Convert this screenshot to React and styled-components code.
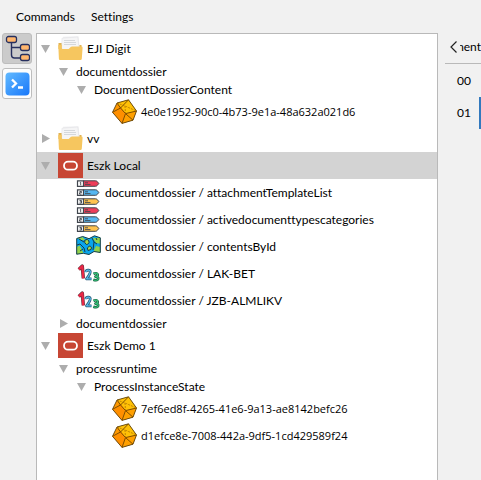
import React, { useState } from "react";
import styled, { createGlobalStyle } from "styled-components";

const GlobalStyle = createGlobalStyle`
  * { box-sizing: border-box; }
  body {
    margin: 0;
    background: #f1f1f1;
    color: #000;
    font: 12px/18px Lato, "Open Sans", sans-serif;
    font-variant-ligatures: none;
  }
  button { font: inherit; color: inherit; border: 0; padding: 0; background: none; }
`;

const Window = styled.div`
  display: flex;
  flex-direction: column;
  height: 100vh;
  overflow: hidden;
`;

const MenuBar = styled.nav`
  display: flex;
  gap: 16px;
  flex: none;
  height: 33px;
  padding: 0 16px;
`;

const MenuButton = styled.button`
  white-space: nowrap;
`;

const Workspace = styled.div`
  display: flex;
  flex: 1;
  min-height: 0;
`;

const ToolRail = styled.aside`
  display: flex;
  flex-direction: column;
  gap: 4px;
  flex: none;
  padding: 0 4px 0 2px;
`;

const ToolButton = styled.button`
  display: grid;
  place-items: center;
  width: 30px;
  height: 31px;
  border: 1px solid #bdbdbd;
  border-radius: 3px;
  background: ${(p) => (p.$active ? "#cbcbcb" : "#fdfdfd")};
  svg { display: block; }
`;

const TreePanel = styled.main`
  flex: 1;
  min-width: 0;
  overflow: hidden;
  padding-top: 1px;
  border: 1px solid #b9b9b9;
  border-bottom: 0;
  background: #fff;
`;

const Tree = styled.ul`
  margin: 0;
  padding: 0;
  list-style: none;
`;

const TreeRow = styled.li`
  display: flex;
  align-items: center;
  height: ${(p) => (p.$tall ? 27 : 18)}px;
  padding-left: ${(p) => 4 + p.$level * 18}px;
  background: ${(p) => (p.$selected ? "#d3d3d3" : "transparent")};
  white-space: nowrap;
`;

const NodeLabel = styled.span`
  padding-top: 1px;
`;

const IdLabel = styled(NodeLabel)`
  font-family: "Open Sans", sans-serif;
  font-size: 11px;
`;

const Caret = styled.button`
  display: block;
  flex: none;
  width: 9px;
  height: 9px;
  margin-right: 8px;
  svg { display: block; }
`;

const CaretSpace = styled.span`
  flex: none;
  width: 17px;
`;

const IconSlot = styled.span`
  flex: none;
  width: 25px;
  height: 25px;
  margin-right: 4px;
  svg { display: block; }
`;

const SidePanel = styled.section`
  flex: none;
  width: 36px;
  margin-left: 7px;
  overflow: hidden;
`;

const TabStrip = styled.div`
  display: flex;
  align-items: center;
  height: 31px;
  padding: 0 0 2px 5px;
  border-bottom: 1px solid #b9b9b9;
`;

const ScrollButton = styled.button`
  flex: none;
  width: 8px;
  svg { display: block; }
`;

const TabLabel = styled.span`
  display: flex;
  flex: 1;
  justify-content: flex-end;
  min-width: 0;
  margin-left: 2px;
  overflow: hidden;
`;

const LineList = styled.ol`
  margin: 0;
  padding: 1px 0 0;
  list-style: none;
`;

const Line = styled.li`
  display: flex;
  align-items: center;
  height: 32px;
  padding-left: 12px;
  border-right: 2px solid ${(p) => (p.$current ? "#3279be" : "transparent")};
`;

const FolderIcon = () => (
  <svg width="25" height="25" viewBox="0 0 25 25" aria-hidden="true">
    <path d="M.5 7h4l2 2h17v4H.5z" fill="#dfb252" />
    <path d="M5 .8 20.5.3 22 15H4z" fill="#eeeef0" />
    <path d="M4 2.2 19.8 1l1.4 13H3.5z" fill="#f5f5f6" stroke="#dedee2" strokeWidth=".5" />
    <path d="M6 4.5h11M6 6.5h12M6 8.5h12" stroke="#cdd0d6" strokeWidth=".8" />
    <path d="M.3 9.5Q.3 8.6 1.3 8.7l2.5.1v3.5q0 .8.9.8h6l2-2q.5-.5 1.3-.5h9.4q1.3 0 1.2 1.1l-.8 11q-.1 1.3-1.4 1.3H2q-1.1 0-1.1-1.2z" fill="#f6c65f" />
  </svg>
);

const OracleIcon = () => (
  <svg width="25" height="25" viewBox="0 0 25 25" aria-hidden="true">
    <path d="M0 0h25v25H0z" fill="#c74634" />
    <rect x="6" y="8.7" width="13" height="8" rx="4" fill="none" stroke="#fff" strokeWidth="1.8" />
  </svg>
);

const CrystalIcon = () => (
  <svg width="25" height="25" viewBox="0 0 25 25" aria-hidden="true">
    <g strokeLinejoin="round">
      <path d="M5 4 16.5.8l8 11.2-3.5 9.2-11 3.2L.5 13.3z" fill="#ff9800" />
      <path d="M5 4 16.5.8l8 11.2-11 2.6-5-7z" fill="#ffc107" />
      <path d="m8.5 9.5 5 5L10 24.4.5 13.3z" fill="#ff8f00" />
      <path d="m13.5 14.6 11-2.6-3.5 9.2-11 3.2z" fill="#ffa000" />
      <path d="M5 4 16.5.8l8 11.2-3.5 9.2-11 3.2L.5 13.3z" fill="none" stroke="#5c4312" strokeWidth=".9" />
    </g>
    <path d="m.5 13.3 8-4.3 5 5.6 11-2.6M13.5 14.6 10 24.4M8.5 9 5 4M8.5 9l8-8.2M13.5 14.6l7.5 6.6" fill="none" stroke="#714500" strokeWidth=".9" />
    <path d="m5 4 8 3 11.5 5M13 7l.5 7.6" fill="none" stroke="#a86b00" strokeWidth=".7" strokeDasharray="2 1" />
  </svg>
);

const listColors = ["#ee3d59", "#56b7f1", "#ffc34f"];
const ListIcon = () => (
  <svg width="25" height="25" viewBox="0 0 25 25" aria-hidden="true">
    {listColors.map((color, i) => (
      <g key={color} transform={`translate(0 ${i * 9})`} stroke="#41464e">
        <path d="M7.5.8h12q1 0 1.7.7l1.6 2-1.6 2q-.7.8-1.7.8h-12z" fill={color} />
        <path d="M1.5.8h6v5.5h-6z" fill="#fff" strokeWidth="1.2" />
        <path d={i === 0 ? "m3.8 2.8.9-.5v3" : i === 1 ? "M3.5 2.5h2v1.2h-2v1.4h2" : "M3.5 2.5h2v2.6h-2M3.8 3.8h1.7"} fill="none" strokeWidth=".9" />
        <path d="M9 2.8h3M9 4.6h5.5" fill="none" strokeWidth=".9" />
      </g>
    ))}
  </svg>
);

const MapIcon = () => (
  <svg width="25" height="25" viewBox="0 0 25 25" aria-hidden="true">
    <path d="m.7 4.5 6-2L13 4.7l5.5-2.9 5.8 2v14.7l-6.3-1-5 3-5.7-1.2-6.6.9z" fill="#0aa5ed" />
    <path d="m.7 13 3-1.5L6 16l1.5 3.3-6.8.9zM17 4l7.3-.2v6L20 9l-2-3zM18 16l2-4 4.3 1v5.5l-6-.8zM1.5 4l5-1 2.6 3-3.3.3z" fill="#93d24c" />
    <path d="M8.8 6.2q3-2 4 .8 1 3-2.5 3.5Q8 9 8.8 6.2zm4.5 6q3 0 1.7 3.3l-3 1q-2-3 1.3-4.3z" fill="#a7d94b" stroke="#123b4a" />
    <path d="m.7 4.5 6-2L13 4.7l5.5-2.9 5.8 2v14.7l-6.3-1-5 3-5.7-1.2-6.6.9zM1 11l3-1 4 4 1 4M3 5l5 3M16 4l2 4-1 8M18 8l3 2M4 17l3-2M20 4l1 2" fill="none" stroke="#163e45" strokeLinejoin="round" />
  </svg>
);

const NumbersIcon = () => (
  <svg width="25" height="25" viewBox="0 0 25 25" aria-hidden="true" fill="none" strokeLinejoin="round">
    <path d="m2.8 8.4 3.5-3.3 1 12.2" stroke="#59303a" strokeWidth="3.4" />
    <path d="m2.8 8.4 3.5-3.3 1 12.2" stroke="#ea2746" strokeWidth="2.3" />
    <path d="M9.8 11.2q.3-2.4 2.8-2.1 2.2.5 1.5 2.7-.5 1.8-3.6 6h5" stroke="#245674" strokeWidth="2.7" />
    <path d="M9.8 11.2q.3-2.4 2.8-2.1 2.2.5 1.5 2.7-.5 1.8-3.6 6h5" stroke="#58bce8" strokeWidth="1.3" />
    <path d="M17.5 12.8q3.4-1.5 4.2.6.2 1.9-2.3 2.2 3.3.2 2.7 2.4-.9 2.1-4.8.7" stroke="#155e3e" strokeWidth="2.6" />
    <path d="M17.5 12.8q3.4-1.5 4.2.6.2 1.9-2.3 2.2 3.3.2 2.7 2.4-.9 2.1-4.8.7" stroke="#36c67b" strokeWidth="1.2" />
  </svg>
);

const HierarchyIcon = () => (
  <svg width="26" height="27" viewBox="0 0 26 27" aria-hidden="true">
    <path d="M7.5 7v13q0 3 3 3h7M7.5 12.5h10" fill="none" stroke="#27305f" strokeWidth="1.4" />
    <g fill="#ffb66d" stroke="#27305f" strokeWidth="1.3">
      <rect x="2.5" y="1.5" width="10" height="6" rx="2" />
      <rect x="16.5" y="9.5" width="9" height="6" rx="2" />
      <rect x="16.5" y="19.5" width="9" height="6" rx="2" />
    </g>
  </svg>
);

const TerminalIcon = () => (
  <svg width="26" height="26" viewBox="0 0 26 26" aria-hidden="true">
    <defs>
      <linearGradient id="terminalFill" x1="0" y1="0" x2="1" y2="1">
        <stop stopColor="#62baff" />
        <stop offset="1" stopColor="#1877fa" />
      </linearGradient>
    </defs>
    <rect x="1.5" y="1.5" width="24" height="23" rx="4" fill="url(#terminalFill)" />
    <path d="m8 8.5 4 4-4 4M14 16.5h5" fill="none" stroke="#fff" strokeWidth="2.3" />
  </svg>
);

const icons = {
  folder: FolderIcon,
  oracle: OracleIcon,
  crystal: CrystalIcon,
  list: ListIcon,
  map: MapIcon,
  numbers: NumbersIcon,
};

const nodes = [
  { label: "EJI Digit", level: 0, icon: "folder", open: true },
  { label: "documentdossier", level: 1, open: true },
  { label: "DocumentDossierContent", level: 2, open: true },
  { label: "4e0e1952-90c0-4b73-9e1a-48a632a021d6", level: 3, icon: "crystal" },
  { label: "vv", level: 0, icon: "folder", open: false },
  { label: "Eszk Local", level: 0, icon: "oracle", open: true },
  { label: "documentdossier / attachmentTemplateList", level: 1, icon: "list" },
  { label: "documentdossier / activedocumenttypescategories", level: 1, icon: "list" },
  { label: "documentdossier / contentsById", level: 1, icon: "map" },
  { label: "documentdossier / LAK-BET", level: 1, icon: "numbers" },
  { label: "documentdossier / JZB-ALMLIKV", level: 1, icon: "numbers" },
  { label: "documentdossier", level: 1, open: false },
  { label: "Eszk Demo 1", level: 0, icon: "oracle", open: true },
  { label: "processruntime", level: 1, open: true },
  { label: "ProcessInstanceState", level: 2, open: true },
  { label: "7ef6ed8f-4265-41e6-9a13-ae8142befc26", level: 3, icon: "crystal" },
  { label: "d1efce8e-7008-442a-9df5-1cd429589f24", level: 3, icon: "crystal" },
];

function TreeNode({ node, selected, onSelect }) {
  const Icon = icons[node.icon];
  const Label = node.icon === "crystal" ? IdLabel : NodeLabel;
  const expandable = node.open !== undefined;
  return (
    <TreeRow
      role="treeitem"
      aria-level={node.level + 1}
      aria-selected={selected}
      aria-expanded={node.open}
      $tall={Boolean(Icon)}
      $level={node.level}
      $selected={selected}
      onClick={onSelect}
    >
      {expandable ? (
        <Caret aria-label={`Toggle ${node.label}`}>
          <svg width="9" height="9" viewBox="0 0 9 9" fill="#adadad" aria-hidden="true">
            <path d={node.open ? "M0 1h9L4.5 9z" : "M1 0v9l8-4.5z"} />
          </svg>
        </Caret>
      ) : (
        <CaretSpace />
      )}
      {Icon && <IconSlot><Icon /></IconSlot>}
      <Label>{node.label}</Label>
    </TreeRow>
  );
}

export default function App() {
  const [selected, setSelected] = useState(5);
  return (
    <Window>
      <GlobalStyle />
      <MenuBar>
        <MenuButton>Commands</MenuButton>
        <MenuButton>Settings</MenuButton>
      </MenuBar>
      <Workspace>
        <ToolRail>
          <ToolButton $active aria-label="Tree view"><HierarchyIcon /></ToolButton>
          <ToolButton aria-label="Terminal"><TerminalIcon /></ToolButton>
        </ToolRail>
        <TreePanel>
          <Tree role="tree">
            {nodes.map((node, i) => (
              <TreeNode key={i} node={node} selected={i === selected} onSelect={() => setSelected(i)} />
            ))}
          </Tree>
        </TreePanel>
        <SidePanel>
          <TabStrip>
            <ScrollButton aria-label="Scroll tabs left">
              <svg width="8" height="12" viewBox="0 0 8 12" fill="none" stroke="#222" strokeWidth="1.2" aria-hidden="true">
                <path d="M6.5.5 1 6l5.5 5.5" />
              </svg>
            </ScrollButton>
            <TabLabel>ment</TabLabel>
          </TabStrip>
          <LineList>
            <Line>00</Line>
            <Line $current>01</Line>
          </LineList>
        </SidePanel>
      </Workspace>
    </Window>
  );
}
